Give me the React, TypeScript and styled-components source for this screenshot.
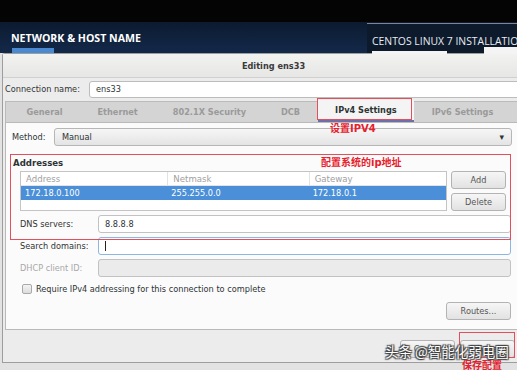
import styled, { createGlobalStyle } from 'styled-components'

const GlobalStyle = createGlobalStyle`
  html, body {
    margin: 0;
    padding: 0;
    background: #e2e2e2;
  }
  * {
    box-sizing: border-box;
  }
`

const ui = `"DejaVu Sans", "Noto Sans CJK SC", sans-serif`
const redLine = '#e2505e'
const redText = '#e6202c'

const columns = [
  { title: 'Address', value: '172.18.0.100', width: 147 },
  { title: 'Netmask', value: '255.255.0.0', width: 142 },
  { title: 'Gateway', value: '172.18.0.1', width: 138 },
]

const tabs = ['General', 'Ethernet', '802.1X Security', 'DCB', 'IPv4 Settings', 'IPv6 Settings']

const App = () => {
  return (
    <>
      <GlobalStyle />
      <Page>
        <TopBand />
        <Header>
          <HeaderLeft>
            <HeaderTitle>NETWORK &amp; HOST NAME</HeaderTitle>
            <HeaderUnderline />
          </HeaderLeft>
          <HeaderRight>
            <ProductName>CENTOS LINUX 7 INSTALLATIO</ProductName>
            <HeaderBars>
              <HeaderBar $width={76} $height={3} />
              <HeaderBar $width={33} $height={7} />
            </HeaderBars>
          </HeaderRight>
        </Header>

        <Dialog>
          <TitleBar>Editing ens33</TitleBar>
          <NameRow>
            <NameLabel>Connection name:</NameLabel>
            <NameInput>ens33</NameInput>
          </NameRow>

          <Notebook>
            <TabBar>
              {tabs.map((t) => (
                <Tab key={t} $active={t === 'IPv4 Settings'}>
                  {t}
                </Tab>
              ))}
            </TabBar>
            <Panel>
              <MethodRow>
                <MethodLabel>Method:</MethodLabel>
                <Combo>
                  <span>Manual</span>
                  <ComboArrow>▾</ComboArrow>
                </Combo>
              </MethodRow>

              <SectionTitle>Addresses</SectionTitle>
              <Section>
                <AddressArea>
                  <AddressTable>
                    <TableRow>
                      {columns.map((c, i) => (
                        <HeadCell key={c.title} $width={c.width} $first={i === 0}>
                          {c.title}
                        </HeadCell>
                      ))}
                    </TableRow>
                    <TableRow $selected>
                      {columns.map((c) => (
                        <Cell key={c.title} $width={c.width}>
                          {c.value}
                        </Cell>
                      ))}
                    </TableRow>
                  </AddressTable>
                  <SideButtons>
                    <Button $width={55}>Add</Button>
                    <Button $width={55}>Delete</Button>
                  </SideButtons>
                </AddressArea>

                <FieldRow>
                  <FieldLabel>DNS servers:</FieldLabel>
                  <Field>8.8.8.8</Field>
                </FieldRow>
                <FieldRow>
                  <FieldLabel>Search domains:</FieldLabel>
                  <Field $focused>
                    <Caret />
                  </Field>
                </FieldRow>
                <FieldRow>
                  <FieldLabel $disabled>DHCP client ID:</FieldLabel>
                  <Field $disabled />
                </FieldRow>

                <CheckRow>
                  <CheckBox />
                  <span>Require IPv4 addressing for this connection to complete</span>
                </CheckRow>

                <RoutesRow>
                  <Button $width={65}>Routes...</Button>
                </RoutesRow>
              </Section>
            </Panel>
          </Notebook>

          <ActionRow>
            <Button $width={55}>Cancel</Button>
            <Button $width={55}>Save</Button>
          </ActionRow>
        </Dialog>

        <Outline $x={317} $y={98} $w={95} $h={22} />
        <Note $x={330} $y={123}>设置IPV4</Note>
        <Outline $x={10} $y={154} $w={501} $h={86} />
        <Note $x={321} $y={157}>配置系统的ip地址</Note>
        <Outline $x={459} $y={332} $w={56} $h={26} />
        <Watermark>头条 @智能化弱电圈</Watermark>
        <Note $x={462} $y={360}>保存配置</Note>
      </Page>
    </>
  )
}

export default App

const Page = styled.div`
  position: relative;
  width: 517px;
  height: 370px;
  overflow: hidden;
  background: #e2e2e2;
  font-family: ${ui};
  font-size: 8.2px;
  color: #2e3436;
`
const TopBand = styled.div`
  height: 22px;
  background: #040404;
`
const Header = styled.div`
  display: flex;
  justify-content: space-between;
  height: 31px;
  background: linear-gradient(180deg, #0c1a2f 0%, #13294a 100%);
`
const HeaderLeft = styled.div`
  display: flex;
  flex-direction: column;
  justify-content: space-between;
  padding: 10px 0 0 11px;
`
const HeaderTitle = styled.div`
  font-family: 'Open Sans', sans-serif;
  font-weight: 700;
  font-size: 10.6px;
  line-height: 12px;
  color: #ffffff;
`
const HeaderUnderline = styled.div`
  width: 42px;
  height: 5px;
  margin-left: 1px;
  background: #4a88cf;
`
const HeaderRight = styled.div`
  display: flex;
  flex-direction: column;
  justify-content: space-between;
  width: 150px;
  margin-top: 1px;
  padding-left: 5px;
  border-top: 1px solid #7b8594;
  background: #0d1a2c;
`
const ProductName = styled.div`
  margin-top: 11px;
  font-family: 'Open Sans', sans-serif;
  font-size: 10.4px;
  line-height: 12px;
  color: #e8ecf2;
  white-space: nowrap;
`
const HeaderBars = styled.div`
  display: flex;
  align-items: flex-end;
  gap: 37px;
`
const HeaderBar = styled.div<{ $width: number; $height: number }>`
  width: ${(p) => p.$width}px;
  height: ${(p) => p.$height}px;
  background: #f4f4f4;
`
const Dialog = styled.div`
  display: flex;
  flex-direction: column;
  width: 520px;
  height: 310px;
  margin-left: 2px;
  border: 1px solid #9d9d9d;
  border-right: 0;
  border-radius: 3px 0 0 0;
  background: #ececec;
`
const TitleBar = styled.div`
  height: 24px;
  padding-left: 22px;
  display: flex;
  align-items: center;
  justify-content: center;
  font-weight: 700;
  color: #3a3a3a;
  background: linear-gradient(180deg, #f2f2f1, #e6e6e5);
  border-bottom: 1px solid #d0d0d0;
`
const NameRow = styled.div`
  display: flex;
  align-items: center;
  gap: 4px;
  height: 21px;
  padding: 1px 0 0 2px;
`
const NameLabel = styled.div`
  width: 80px;
  color: #333;
`
const NameInput = styled.div`
  flex: 1;
  height: 17px;
  display: flex;
  align-items: center;
  padding-left: 6px;
  background: #ffffff;
  border: 1px solid #bcbcbc;
  border-radius: 3px;
`
const Notebook = styled.div`
  display: flex;
  flex-direction: column;
  margin: 2px 4px 0 2px;
`
const TabBar = styled.div`
  display: flex;
  height: 21px;
  padding-left: 3px;
  background: #d4d4d4;
  border: 1px solid #bbbbbb;
  border-bottom: 0;
`
const Tab = styled.div<{ $active?: boolean }>`
  display: flex;
  align-items: center;
  padding: 0 17.5px;
  font-weight: 700;
  white-space: nowrap;
  color: ${(p) => (p.$active ? '#2e3436' : '#9a9a9a')};
  background: ${(p) => (p.$active ? '#f4f4f4' : 'transparent')};
  border-bottom: ${(p) => (p.$active ? '2px solid #6d6fa6' : '0')};
  margin-top: ${(p) => (p.$active ? '-2px' : '0')};
`
const Panel = styled.div`
  height: 208px;
  padding: 5px 5px 0 6px;
  background: #fbfbfb;
  border: 1px solid #b9b9b9;
`
const MethodRow = styled.div`
  display: flex;
  align-items: center;
`
const MethodLabel = styled.div`
  width: 42px;
`
const Combo = styled.div`
  flex: 1;
  height: 18px;
  display: flex;
  align-items: center;
  justify-content: space-between;
  padding: 0 7px 0 7px;
  background: linear-gradient(180deg, #f6f6f6, #e4e4e4);
  border: 1px solid #b6b6b6;
  border-radius: 3px;
`
const ComboArrow = styled.span`
  font-size: 9px;
  color: #333;
`
const SectionTitle = styled.div`
  margin: 12px 0 0 1px;
  font-weight: 700;
  font-size: 8.6px;
  line-height: 10px;
`
const Section = styled.div`
  display: flex;
  flex-direction: column;
  margin: 3px 1px 0 8px;
`
const AddressArea = styled.div`
  display: flex;
  gap: 4px;
`
const AddressTable = styled.div`
  width: 427px;
  height: 40px;
  background: #ffffff;
  border: 1px solid #c4c4c4;
`
const TableRow = styled.div<{ $selected?: boolean }>`
  display: flex;
  height: 14px;
  color: ${(p) => (p.$selected ? '#ffffff' : '#a0a0a0')};
  background: ${(p) => (p.$selected ? '#4a8fd7' : 'transparent')};
  border-bottom: ${(p) => (p.$selected ? '0' : '1px solid #e4e4e4')};
`
const HeadCell = styled.div<{ $width: number; $first?: boolean }>`
  width: ${(p) => p.$width}px;
  display: flex;
  align-items: center;
  padding-left: 5px;
  font-size: 8.6px;
  border-left: ${(p) => (p.$first ? '0' : '1px solid #e2e2e2')};
`
const Cell = styled.div<{ $width: number }>`
  width: ${(p) => p.$width}px;
  display: flex;
  align-items: center;
  padding-left: 4px;
`
const SideButtons = styled.div`
  display: flex;
  flex-direction: column;
  gap: 4px;
`
const Button = styled.div<{ $width: number }>`
  width: ${(p) => p.$width}px;
  height: 18px;
  display: flex;
  align-items: center;
  justify-content: center;
  color: #555;
  background: linear-gradient(180deg, #f6f6f6, #e2e2e2);
  border: 1px solid #b3b3b3;
  border-radius: 3px;
`
const FieldRow = styled.div`
  display: flex;
  align-items: center;
  margin-top: 4px;
`
const FieldLabel = styled.div<{ $disabled?: boolean }>`
  width: 78px;
  color: ${(p) => (p.$disabled ? '#a8a8a8' : '#333')};
`
const Field = styled.div<{ $focused?: boolean; $disabled?: boolean }>`
  flex: 1;
  height: 18px;
  display: flex;
  align-items: center;
  padding-left: 6px;
  background: ${(p) => (p.$disabled ? '#ebebeb' : '#ffffff')};
  border: 1px solid ${(p) => (p.$focused ? '#8db6e2' : '#c2c2c2')};
  border-radius: 3px;
`
const Caret = styled.div`
  width: 1px;
  height: 10px;
  background: #222;
`
const CheckRow = styled.div`
  display: flex;
  align-items: center;
  gap: 4px;
  height: 10px;
  margin: 7px 0 0 2px;
`
const CheckBox = styled.div`
  width: 10px;
  height: 10px;
  background: linear-gradient(180deg, #f4f4f4, #dcdcdc);
  border: 1px solid #a9a9a9;
  border-radius: 2px;
`
const RoutesRow = styled.div`
  display: flex;
  justify-content: flex-end;
  margin-top: 8px;
`
const ActionRow = styled.div`
  display: flex;
  gap: 5px;
  margin: 10px 0 0 397px;
`
const Outline = styled.div<{ $x: number; $y: number; $w: number; $h: number }>`
  position: absolute;
  left: ${(p) => p.$x}px;
  top: ${(p) => p.$y}px;
  width: ${(p) => p.$w}px;
  height: ${(p) => p.$h}px;
  border: 1px solid ${redLine};
`
const Note = styled.div<{ $x: number; $y: number }>`
  position: absolute;
  left: ${(p) => p.$x}px;
  top: ${(p) => p.$y}px;
  font-family: ${ui};
  font-size: 10px;
  font-weight: 700;
  line-height: 12px;
  color: ${redText};
  white-space: nowrap;
`
const Watermark = styled.div`
  position: absolute;
  left: 385px;
  top: 343px;
  font-family: 'Noto Sans CJK SC', sans-serif;
  font-size: 13.5px;
  line-height: 17px;
  color: #ffffff;
  white-space: nowrap;
  text-shadow: 0 0 1px #333, 1px 1px 1px #444, -1px -1px 1px #444, 1px -1px 1px #444, -1px 1px 1px #444;
`
